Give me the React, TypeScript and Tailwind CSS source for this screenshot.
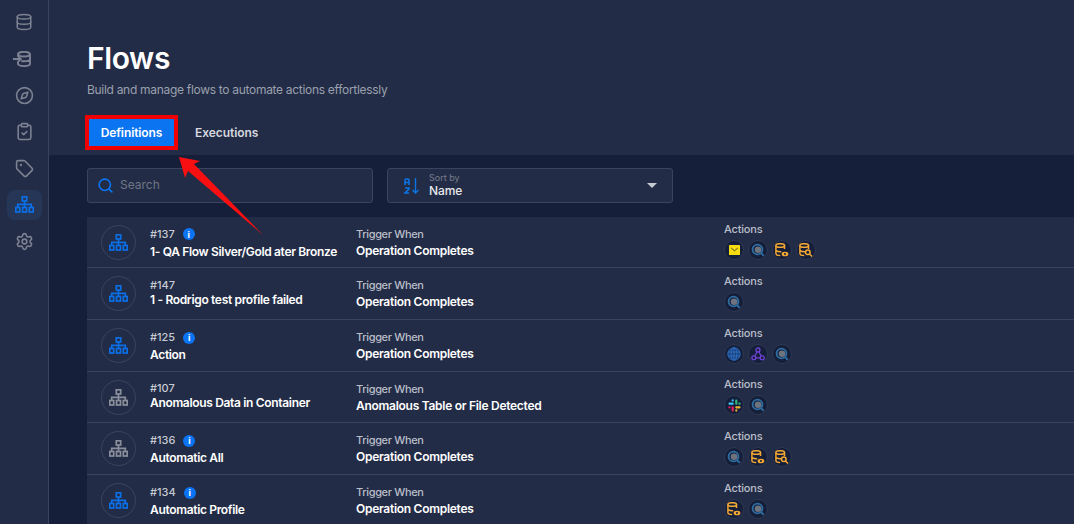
import React from "react";
import { Database, Compass, ClipboardCheck, Tag, Settings, Search } from "lucide-react";

const font = { fontFamily: "Inter, 'Noto Sans', sans-serif" };

function FlowIcon({ className = "" }: { className?: string }) {
  return (
    <svg width="19" height="17" viewBox="0 0 19 17" fill="none" stroke="currentColor" strokeWidth="1.700" className={className}>
      <rect x="7.300" y="0.800" width="4.400" height="4.200" />
      <path d="M9.500 5v6M2.700 11.500V8.300h13.600v3.200" />
      <rect x="0.800" y="11.500" width="3.900" height="4.500" />
      <rect x="7.500" y="11.500" width="4" height="4.500" />
      <rect x="14.300" y="11.500" width="3.900" height="4.500" />
    </svg>
  );
}

function DbImport() {
  return (
    <svg width="18" height="16" viewBox="0 0 18 16" fill="none" stroke="#7c8292" strokeWidth="1.900" className="-ml-[4px]">
      <ellipse cx="11" cy="3.200" rx="6" ry="2.300" />
      <path d="M5 3.200v2.300M17 3.200v9.600c0 1.300-2.700 2.300-6 2.300s-6-1-6-2.300V10.500M17 8c0 1.300-2.700 2.300-6 2.300-1 0-1.900-.1-2.700-.3" />
      <path d="M0 8h7.500M5 5.200 7.800 8 5 10.800" />
    </svg>
  );
}

function AZIcon() {
  return (
    <svg width="16" height="16" viewBox="0 0 16 16" fill="none" stroke="#0b74e5">
      <path d="M1 7V2.200Q1 1 2.200 1h1.600Q5 1 5 2.200V7M1 4.500h4" strokeWidth="1.600" />
      <path d="M1 10h4v1L1 15v0h4" strokeWidth="1.600" />
      <path d="M11.500 0v15M8.500 12l3 3 3-3" strokeWidth="1.400" />
    </svg>
  );
}

function Mail() {
  return (
    <svg width="11" height="10" viewBox="0 0 11 10">
      <rect width="11" height="10" rx="0.600" fill="#f7dc11" />
      <path d="M2.200 3 5.500 5.800 8.800 3" stroke="#3b3a20" strokeWidth="0.900" fill="none" />
    </svg>
  );
}

function Scan() {
  return (
    <svg width="14" height="14" viewBox="0 0 14 14" fill="none">
      <circle cx="6.500" cy="6.500" r="4.900" stroke="#2f6ea3" strokeWidth="1.800" />
      <circle cx="7" cy="6.800" r="3.300" fill="#6d7480" />
      <path d="M10 10l2.800 2.800" stroke="#2f6ea3" strokeWidth="1.800" />
    </svg>
  );
}

function DbBase({ badge }: { badge: "eye" | "search" }) {
  return (
    <svg width="14" height="14" viewBox="0 0 14 14" fill="none" stroke="#f3a833" strokeWidth="1.500">
      <ellipse cx="5.200" cy="2.500" rx="4.300" ry="1.800" />
      <path d="M.9 2.500v8c0 1.100 1.800 2 4.300 2M9.500 2.500v3.500M.9 6.800c0 1 1.800 1.900 4.300 1.900h1" />
      {badge === "eye" ? (
        <>
          <ellipse cx="10" cy="11" rx="3.400" ry="2.300" fill="#f3a833" stroke="none" />
          <circle cx="10" cy="11" r="1" fill="#161f3a" stroke="none" />
        </>
      ) : (
        <>
          <circle cx="8.800" cy="9.300" r="2.300" />
          <path d="M10.500 11l2.500 2.500" />
        </>
      )}
    </svg>
  );
}

function Globe() {
  return (
    <svg width="14" height="14" viewBox="0 0 14 14" fill="none" stroke="#2c6fc0" strokeWidth="1">
      <circle cx="7" cy="7" r="6.200" fill="#1d3f78" />
      <ellipse cx="7" cy="7" rx="3" ry="6.200" />
      <path d="M1 5h12M1 9h12M7 .8v12.400" />
    </svg>
  );
}

function Hook() {
  return (
    <svg width="14" height="14" viewBox="0 0 14 14" fill="none" stroke="#6f42d8" strokeWidth="1.300">
      <circle cx="7" cy="3" r="2" />
      <circle cx="2.800" cy="10.800" r="2" />
      <circle cx="11.200" cy="10.800" r="2" />
      <path d="M6 5 3.800 9M8 5l2.200 4M4.800 10.800h4.400" />
    </svg>
  );
}

function Slack() {
  return (
    <svg width="13" height="13" viewBox="0 0 13 13" strokeWidth="2.200" strokeLinecap="round" fill="none">
      <path d="M1.500 4.700h3.200M4.700 1.300v.2" stroke="#36c5f0" />
      <path d="M8.300 1.500v3.200M11.600 4.700h-.2" stroke="#2eb67d" />
      <path d="M11.500 8.300H8.300M8.300 11.600v-.2" stroke="#ecb22e" />
      <path d="M4.700 11.500V8.300M1.400 8.300h.2" stroke="#e01e5a" />
    </svg>
  );
}

const icons: Record<string, React.ReactNode> = {
  mail: <Mail />,
  scan: <Scan />,
  eye: <DbBase badge="eye" />,
  search: <DbBase badge="search" />,
  globe: <Globe />,
  hook: <Hook />,
  slack: <Slack />,
};

type Row = {
  id: string;
  name: string;
  info: boolean;
  on: boolean;
  trigger: string;
  actions: string[];
  h: string;
};

const rows: Row[] = [
  { id: "#137", name: "1- QA Flow Silver/Gold ater Bronze", info: true, on: true, trigger: "Operation Completes", actions: ["mail", "scan", "eye", "search"], h: "h-[51px]" },
  { id: "#147", name: "1 - Rodrigo test profile failed", info: false, on: true, trigger: "Operation Completes", actions: ["scan"], h: "h-[52px]" },
  { id: "#125", name: "Action", info: true, on: true, trigger: "Operation Completes", actions: ["globe", "hook", "scan"], h: "h-[52px]" },
  { id: "#107", name: "Anomalous Data in Container", info: false, on: false, trigger: "Anomalous Table or File Detected", actions: ["slack", "scan"], h: "h-[51px]" },
  { id: "#136", name: "Automatic All", info: true, on: false, trigger: "Operation Completes", actions: ["scan", "eye", "search"], h: "h-[52px]" },
  { id: "#134", name: "Automatic Profile", info: true, on: true, trigger: "Operation Completes", actions: ["eye", "scan"], h: "h-[52px]" },
];

function FlowRow({ r }: { r: Row }) {
  return (
    <div className={`flex items-center ${r.h} border-b border-[#3a4460] pl-[14px] shrink-0`}>
      <div className="w-[35px] h-[35px] rounded-full border border-[#3a4460] flex items-center justify-center shrink-0">
        <FlowIcon className={r.on ? "text-[#0b6fe8]" : "text-[#8a8f9c]"} />
      </div>
      <div className={`w-[206px] ml-[14px] shrink-0 flex flex-col ${r.info ? "gap-[2px] pt-[1px]" : "gap-0 pb-[2px]"}`}>
        <div className={`flex items-center gap-[8px] text-[11px] font-medium text-[#c6cad3] leading-none ${r.info ? "h-[15px]" : "h-[13px]"}`}>
          {r.id}
          {r.info && (
            <span className="w-[12px] h-[12px] rounded-full bg-[#0b74f5] text-white flex items-center justify-center text-[9px] font-bold leading-none">i</span>
          )}
        </div>
        <div className="text-[12px] font-semibold tracking-[-0.33px] text-white leading-[15px] whitespace-nowrap">{r.name}</div>
      </div>
      <div className="w-[368px] shrink-0 flex flex-col gap-[2px]">
        <div className="text-[11px] font-medium tracking-[-0.35px] text-[#b9bec9] leading-[14px]">Trigger When</div>
        <div className="text-[12px] font-semibold tracking-[-0.28px] text-white leading-[15px]">{r.trigger}</div>
      </div>
      <div className="flex flex-col gap-[4px] pb-[2px]">
        <div className="text-[11px] font-medium tracking-[-0.2px] text-[#b9bec9] leading-[14px]">Actions</div>
        <div className="flex gap-1">
          {r.actions.map((a, i) => (
            <div key={i} className="w-5 h-5 rounded-full bg-[#161f3a] border border-[#2e3852] flex items-center justify-center">
              {icons[a]}
            </div>
          ))}
        </div>
      </div>
    </div>
  );
}

function Nav({ children, active }: { children: React.ReactNode; active?: boolean }) {
  return (
    <div className="h-[36.500px] flex items-center justify-center shrink-0">
      {active ? <div className="w-[35px] h-[30px] rounded-lg bg-[#263656] flex items-center justify-center">{children}</div> : children}
    </div>
  );
}

export default function App() {
  return (
    <div style={font} className="relative w-[1074px] h-[524px] overflow-hidden flex bg-[#161f3a] text-white">
      <aside className="w-[49px] shrink-0 bg-[#232c46] border-r border-[#3a4460] flex flex-col pt-[4px] text-[#7c8292]">
        <Nav><Database size={18} strokeWidth={2} /></Nav>
        <Nav><DbImport /></Nav>
        <Nav><Compass size={19} strokeWidth={2} /></Nav>
        <Nav><ClipboardCheck size={19} strokeWidth={2} /></Nav>
        <Nav><Tag size={19} strokeWidth={2} /></Nav>
        <Nav active><FlowIcon className="text-[#0b6fe8]" /></Nav>
        <Nav><Settings size={19} strokeWidth={2} /></Nav>
      </aside>
      <main className="flex-1 min-w-0 flex flex-col">
        <header className="h-[155px] shrink-0 bg-[#232c46] pl-[38px] pt-[39px]">
          <h1 className="text-[30px] leading-[38px] font-semibold tracking-[-0.4px] text-white">Flows</h1>
          <p className="text-[12px] leading-[16px] tracking-[-0.3px] mt-[5px] text-[#9aa0ae]">Build and manage flows to automate actions effortlessly</p>
          <div className="flex items-center mt-[21px] ml-[2px]">
            <button className="w-[85px] h-[27px] bg-[#0b74f0] outline-4 outline-[#f00000] text-[12px] tracking-[-0.1px] font-semibold text-white">Definitions</button>
            <span className="ml-[21px] text-[12px] font-semibold tracking-[-0.05px] text-[#d5d8df]">Executions</span>
          </div>
        </header>
        <div className="pl-[38px] pt-[13px] flex flex-col">
          <div className="flex gap-[14px]">
            <div className="w-[286px] h-[35px] bg-[#232c46] border border-[#3a4460] rounded-[3px] flex items-center pl-[9px] gap-[6px]">
              <Search size={17} strokeWidth={2.300} className="text-[#0b74f0]" />
              <span className="text-[12px] leading-[14px] -mt-[2px] text-[#6f7687]">Search</span>
            </div>
            <div className="w-[286px] h-[35px] bg-[#232c46] border border-[#3a4460] rounded-[3px] flex items-center pl-[16px] pr-[15px]">
              <AZIcon />
              <div className="ml-[9px] flex-1 flex flex-col">
                <span className="text-[9px] leading-[10px] text-[#767c8c]">Sort by</span>
                <span className="text-[12px] leading-[15px] font-medium tracking-[-0.1px] text-[#e6e8ec]">Name</span>
              </div>
              <span className="w-0 h-0 border-l-[5px] border-r-[5px] border-t-[5px] border-l-transparent border-r-transparent border-t-[#c6cad3]" />
            </div>
          </div>
          <div className="mt-[14px] bg-[#232c46] flex flex-col">
            {rows.map((r) => (
              <FlowRow key={r.id} r={r} />
            ))}
          </div>
        </div>
      </main>
      <svg className="absolute left-[175px] top-[153px]" width="90" height="84" viewBox="0 0 90 84">
        <path d="M4 4 L25 8 L19 11 L88 82 L13 18 L10 25 Z" fill="#f80f12" />
      </svg>
    </div>
  );
}
